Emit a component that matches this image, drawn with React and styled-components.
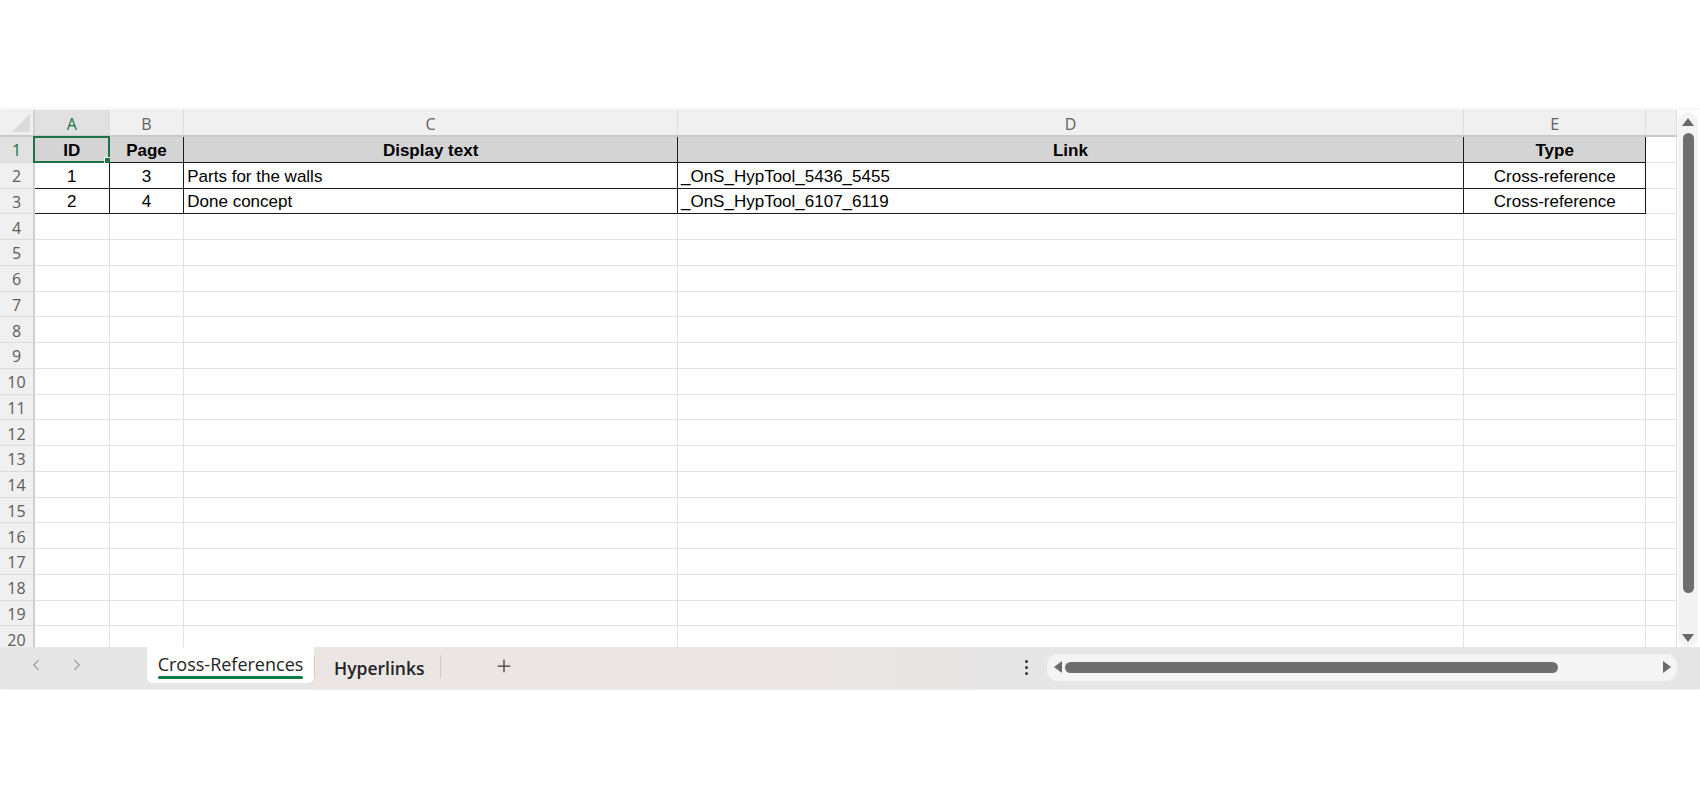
import React from 'react';
import styled, { createGlobalStyle } from 'styled-components';
import { ChevronLeft, ChevronRight, Plus } from 'lucide-react';

const GlobalStyle = createGlobalStyle`
  html, body { margin: 0; padding: 0; background: #fff; }
  * { box-sizing: border-box; }
`;

const UI_FONT = `"Open Sans", "Noto Sans", sans-serif`;
const CELL_FONT = `"Liberation Sans", Arial, sans-serif`;

const Page = styled.div`
  width: 1700px;
  height: 800px;
  padding-top: 110px;
  background: #fff;
  overflow: hidden;
`;

const Workbook = styled.div`
  display: flex;
  flex-direction: column;
  width: 100%;
  box-shadow: 0 -1px 3px rgba(0, 0, 0, 0.07), 0 1px 2px rgba(0, 0, 0, 0.05);
`;

const SheetArea = styled.div`
  display: flex;
  height: 537px;
`;

const Grid = styled.div`
  flex: 1;
  display: grid;
  grid-template-columns: 35px 74.7px 74.6px 493.7px 786px 182.5px 1fr;
  grid-template-rows: 27px repeat(20, 25.75px);
  overflow: hidden;
  background: #fff;
`;

const Corner = styled.div`
  position: relative;
  background: #f0f0f0;
  border-right: 2px solid #cfcfcf;
  border-bottom: 2px solid #c9c9c9;
  &::after {
    content: '';
    position: absolute;
    right: 3px;
    bottom: 3px;
    width: 0;
    height: 0;
    border-left: 18px solid transparent;
    border-bottom: 18px solid #dadada;
  }
`;

const ColHead = styled.div`
  display: flex;
  align-items: center;
  justify-content: center;
  background: ${p => (p.$active ? '#e1e1e1' : '#f0f0f0')};
  color: ${p => (p.$active ? '#1b7343' : '#616161')};
  border-right: 1px solid #dcdcdc;
  border-bottom: 2px solid #c9c9c9;
  font-family: ${UI_FONT};
  font-size: 16px;
  padding-top: 2px;
`;

const RowHead = styled.div`
  display: flex;
  align-items: center;
  justify-content: center;
  background: ${p => (p.$active ? '#e1e1e1' : '#f0f0f0')};
  color: ${p => (p.$active ? '#1b7343' : '#5b5b5b')};
  border-right: 2px solid #cfcfcf;
  border-bottom: 1px solid #dcdcdc;
  font-family: ${UI_FONT};
  font-size: 16px;
  padding-top: 2px;
`;

const Cell = styled.div`
  position: relative;
  display: flex;
  align-items: center;
  justify-content: ${p => (p.$align === 'center' ? 'center' : 'flex-start')};
  padding: 3px 3px 0;
  background: ${p => (p.$fill ? '#d4d4d4' : '#fff')};
  border-right: 1px solid ${p => (p.$ruled ? '#1c1c1c' : '#e1e1e1')};
  border-bottom: 1px solid ${p => (p.$ruled ? '#1c1c1c' : '#e1e1e1')};
  font-family: ${CELL_FONT};
  font-size: 17px;
  font-weight: ${p => (p.$bold ? 700 : 400)};
  color: #000;
  white-space: nowrap;
  overflow: visible;
`;

const Selection = styled.div`
  position: absolute;
  inset: -1px -1px -1px -2px;
  border: 2px solid #1e7145;
  pointer-events: none;
  &::after {
    content: '';
    position: absolute;
    right: -4px;
    bottom: -4px;
    width: 6px;
    height: 6px;
    background: #1e7145;
    border: 1px solid #fff;
  }
`;

const VScroll = styled.div`
  width: 23px;
  padding: 2px 2px 0 1px;
  background: #fff;
  display: flex;
`;

const VTrack = styled.div`
  flex: 1;
  display: flex;
  flex-direction: column;
  align-items: center;
  background: #f3f3f3;
  border-radius: 10px;
`;

const ArrowBox = styled.div`
  display: flex;
  align-items: center;
  justify-content: center;
  width: ${p => p.$w || 20}px;
  height: ${p => p.$h || 20}px;
  flex-shrink: 0;
`;

const Triangle = styled.div`
  width: 0;
  height: 0;
  ${p => p.$dir === 'up' && `
    border-left: 6px solid transparent;
    border-right: 6px solid transparent;
    border-bottom: 8px solid #6a6a6a;
  `}
  ${p => p.$dir === 'down' && `
    border-left: 6px solid transparent;
    border-right: 6px solid transparent;
    border-top: 8px solid #6a6a6a;
  `}
  ${p => p.$dir === 'left' && `
    border-top: 6px solid transparent;
    border-bottom: 6px solid transparent;
    border-right: 8px solid #6a6a6a;
  `}
  ${p => p.$dir === 'right' && `
    border-top: 6px solid transparent;
    border-bottom: 6px solid transparent;
    border-left: 8px solid #6a6a6a;
  `}
`;

const VThumb = styled.div`
  width: 11px;
  height: 460px;
  margin-top: 1px;
  border-radius: 6px;
  background: #6e6e6e;
`;

const Spacer = styled.div`
  flex: 1;
`;

const TabBar = styled.div`
  display: flex;
  height: 42px;
  background: #e6e6e6;
`;

const NavBox = styled.div`
  display: flex;
  align-items: center;
  gap: 23px;
  width: 147px;
  padding: 0 0 6px 27px;
  background: #e6e6e6;
  border-top-right-radius: 6px;
  color: #9c9c9c;
`;

const ActiveTab = styled.div`
  position: relative;
  width: 167px;
  height: 36px;
  display: flex;
  align-items: center;
  justify-content: center;
  background: #fff;
  border-radius: 0 0 6px 6px;
  font-family: ${UI_FONT};
  font-size: 18px;
  font-weight: 500;
  color: #242424;
  padding-bottom: 2px;
  &::after {
    content: '';
    position: absolute;
    left: 11px;
    right: 11px;
    bottom: 4px;
    height: 3px;
    border-radius: 2px;
    background: #107c41;
  }
`;

const TabStrip = styled.div`
  flex: 1;
  display: flex;
  align-items: center;
  padding-bottom: 4px;
  background: linear-gradient(90deg, #ebe6e4 0%, #ebe6e4 70%, #e6e6e6 100%);
  border-top-left-radius: 6px;
`;

const Divider = styled.div`
  width: 1px;
  height: 23px;
  background: #cfcac8;
`;

const Tab = styled.div`
  padding: 0 16px 0 19px;
  font-family: ${UI_FONT};
  font-size: 17.5px;
  font-weight: 600;
  color: #242424;
  padding-top: 3px;
`;

const AddButton = styled.div`
  display: flex;
  align-items: center;
  justify-content: center;
  width: 40px;
  margin-left: 43px;
  color: #3a3a3a;
`;

const BarRest = styled.div`
  display: flex;
  align-items: center;
  width: 682px;
  padding: 0 23px 2px 0;
  background: #e6e6e6;
`;

const MoreDots = styled.div`
  display: flex;
  flex-direction: column;
  align-items: center;
  gap: 3px;
  width: 16px;
  margin-right: 13px;
  span {
    width: 3px;
    height: 3px;
    border-radius: 50%;
    background: #333;
  }
`;

const HTrack = styled.div`
  flex: 1;
  display: flex;
  align-items: center;
  height: 27px;
  padding: 0 4px 0 5px;
  background: #f4f4f4;
  border-radius: 11px;
`;

const HThumb = styled.div`
  width: 493px;
  height: 11px;
  margin-left: 1px;
  border-radius: 6px;
  background: #6e6e6e;
`;

const columns = [
  { key: 'A', align: 'center' },
  { key: 'B', align: 'center' },
  { key: 'C', align: 'left' },
  { key: 'D', align: 'left' },
  { key: 'E', align: 'center' },
  { key: '', align: 'left' },
];

const rows = [
  ['ID', 'Page', 'Display text', 'Link', 'Type'],
  ['1', '3', 'Parts for the walls', '_OnS_HypTool_5436_5455', 'Cross-reference'],
  ['2', '4', 'Done concept', '_OnS_HypTool_6107_6119', 'Cross-reference'],
];

const ROW_COUNT = 20;

export default function App() {
  const body = [];
  for (let r = 0; r < ROW_COUNT; r++) {
    body.push(
      <RowHead key={`h${r}`} $active={r === 0}>{r + 1}</RowHead>
    );
    columns.forEach((col, c) => {
      const inTable = r < rows.length && c < 5;
      const value = inTable ? rows[r][c] : '';
      body.push(
        <Cell
          key={`c${r}-${c}`}
          $ruled={inTable}
          $fill={inTable && r === 0}
          $bold={inTable && r === 0}
          $align={r === 0 ? 'center' : col.align}
        >
          {value}
          {r === 0 && c === 0 && <Selection />}
        </Cell>
      );
    });
  }

  return (
    <Page>
      <GlobalStyle />
      <Workbook>
        <SheetArea>
          <Grid>
            <Corner />
            {columns.map((col, i) => (
              <ColHead key={i} $active={col.key === 'A'}>{col.key}</ColHead>
            ))}
            {body}
          </Grid>
          <VScroll>
            <VTrack>
              <ArrowBox $w={20} $h={20}><Triangle $dir="up" /></ArrowBox>
              <VThumb />
              <Spacer />
              <ArrowBox $w={20} $h={18}><Triangle $dir="down" /></ArrowBox>
            </VTrack>
          </VScroll>
        </SheetArea>
        <TabBar>
          <NavBox>
            <ChevronLeft size={18} strokeWidth={1.5} />
            <ChevronRight size={18} strokeWidth={1.5} />
          </NavBox>
          <ActiveTab>Cross-References</ActiveTab>
          <TabStrip>
            <Divider />
            <Tab>Hyperlinks</Tab>
            <Divider />
            <AddButton><Plus size={20} strokeWidth={1.5} /></AddButton>
          </TabStrip>
          <BarRest>
            <MoreDots><span /><span /><span /></MoreDots>
            <HTrack>
              <ArrowBox $w={12} $h={20}><Triangle $dir="left" /></ArrowBox>
              <HThumb />
              <Spacer />
              <ArrowBox $w={12} $h={20}><Triangle $dir="right" /></ArrowBox>
            </HTrack>
          </BarRest>
        </TabBar>
      </Workbook>
    </Page>
  );
}
